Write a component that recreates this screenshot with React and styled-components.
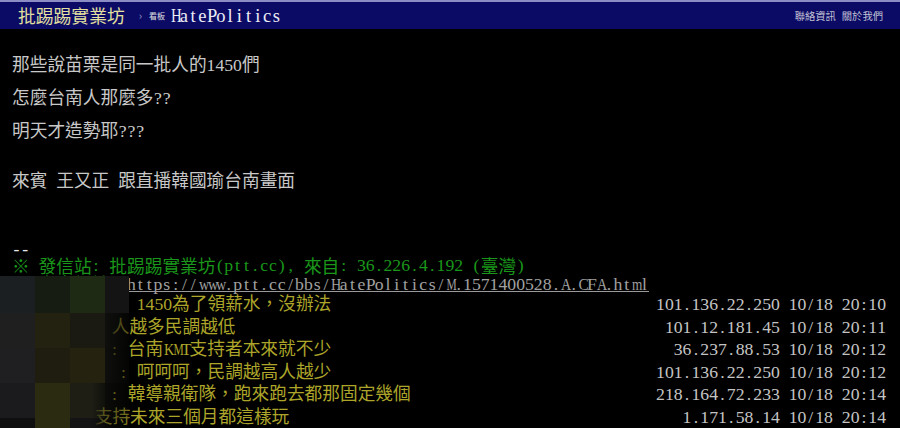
import React from 'react';
import styled, { createGlobalStyle } from 'styled-components';

const CJK = `"Noto Sans CJK TC", "Noto Sans CJK SC", sans-serif`;

const Global = createGlobalStyle`
  html, body { margin: 0; padding: 0; background: #000; }
  body { width: 900px; height: 428px; overflow: hidden; font-family: ${CJK}; }
`;

const Page = styled.div`
  width: 900px;
  height: 428px;
  background: #000;
  overflow: hidden;
`;

const TopBar = styled.header`
  height: 29px;
  box-sizing: border-box;
  border-top: 2px solid #8c8cc4;
  background: #0b0b66;
  display: flex;
  align-items: center;
  padding: 0 17px 0 18px;
`;

const SiteTitle = styled.span`
  font-family: ${CJK};
  font-size: 17.8px;
  line-height: 1;
  color: #e4e0a0;
`;

const Crumb = styled.span`
  font-family: ${CJK};
  font-size: 11px;
  line-height: 1;
  color: #9a9ac4;
  margin-left: 14px;
`;

const BoardLabel = styled.span`
  font-family: ${CJK};
  font-size: 8px;
  line-height: 1;
  color: #e0e0e0;
  margin-left: 7px;
`;

const BoardName = styled.span`
  font-size: 18.5px;
  line-height: 1;
  color: #ececf4;
  margin-left: 5px;
  white-space: pre;
`;

const Links = styled.nav`
  margin-left: auto;
  display: flex;
  gap: 6px;
`;

const LinkItem = styled.span`
  font-family: ${CJK};
  font-size: 10.3px;
  color: #c0c0d4;
`;

const Article = styled.main`
  padding: 17.5px 14px 0 12px;
`;

const TextLine = styled.div`
  font-family: ${CJK};
  font-size: 17.7px;
  line-height: 33px;
  height: 33px;
  color: #c8c8c8;
  white-space: pre;
`;

const Spacer = styled.div`
  height: ${(p) => p.$h}px;
`;

/* one half-width terminal cell, like MingLiU's Latin glyphs */
const Cell = styled.span`
  display: inline-block;
  width: 0.5em;
  text-align: center;
  font-family: "Liberation Serif", serif;
  transform: scaleX(${(p) => p.$sx});
`;

const Row = styled.div`
  display: flex;
  align-items: center;
  height: ${(p) => p.$h}px;
  line-height: ${(p) => p.$h}px;
  font-family: ${CJK};
  font-size: 17.7px;
  color: ${(p) => p.$color || '#c8c8c8'};
  white-space: pre;
`;

const Url = styled.span`
  display: inline-block;
  color: #a0a0a0;
  line-height: 14px;
  border-bottom: 1px solid #9a9a9a;
`;

const Footer = styled.section`
  position: relative;
`;

const PushContent = styled.span`
  margin-left: ${(p) => p.$indent}px;
  color: #aca52a;
`;

const PushMeta = styled.span`
  margin-left: auto;
  color: #c4c4c4;
`;

const Mosaic = styled.div`
  position: absolute;
  top: 1px;
  left: -12px;
  display: grid;
  grid-template-columns: 35px 35px 35px 24px;
  grid-template-rows: 37px 35px 35px 35px 10px;
`;

const Tile = styled.div`
  background: ${(p) => p.$bg};
`;

const WIDE = {
  m: 0.778, w: 0.722, M: 0.889, W: 0.944, H: 0.722, A: 0.722, C: 0.667, K: 0.722,
  T: 0.611, D: 0.722, N: 0.722, O: 0.722, U: 0.722, V: 0.722, G: 0.722, Q: 0.722,
  R: 0.667, B: 0.667, E: 0.611, L: 0.611, Z: 0.611, X: 0.722, Y: 0.722, S: 0.556,
  F: 0.556, P: 0.556, '%': 0.833, '@': 0.921,
};

const Mono = ({ text }) =>
  [...text].map((ch, i) => (
    <Cell key={i} $sx={WIDE[ch] ? Math.min(1, 0.58 / WIDE[ch]).toFixed(2) : 1}>
      {ch}
    </Cell>
  ));

const mix = (str) => {
  const parts = str.match(/[\x20-\x7e]+|[^\x20-\x7e]+/g) || [];
  return parts.map((s, i) =>
    /^[\x20-\x7e]+$/.test(s) ? <Mono key={i} text={s} /> : <React.Fragment key={i}>{s}</React.Fragment>
  );
};

const fade = (a) => `linear-gradient(90deg, rgba(18,18,16,${a}) 0%, rgba(10,10,8,${a * 0.55}) 100%)`;

const tiles = [
  ['#1b1f22', '#171c12', '#1e2a14', '#141414'],
  ['#1f1f20', '#23210f', '#1a1a13', fade(0.85)],
  ['#1f1f21', '#1e1d10', '#25230f', fade(0.8)],
  ['#1b1b1d', '#2b2b12', 'linear-gradient(90deg,#1e1e15 0%,#1e1e15 60%,rgba(30,30,21,0.55) 100%)', fade(0.6)],
  ['#0f0f0f', '#2b2b12', 'linear-gradient(90deg,#141414 0%,#141414 60%,rgba(20,20,20,0.5) 100%)', fade(0.5)],
];

const pushes = [
  { indent: 107, text: ': 1450為了領薪水，沒辦法', meta: '101.136.22.250 10/18 20:10' },
  { indent: 82, text: ': 人越多民調越低', meta: '101.12.181.45 10/18 20:11' },
  { indent: 98, text: ': 台南KMT支持者本來就不少', meta: '36.237.88.53 10/18 20:12' },
  { indent: 107, text: ': 呵呵呵，民調越高人越少', meta: '101.136.22.250 10/18 20:12' },
  { indent: 98, text: ': 韓導親衛隊，跑來跑去都那固定幾個', meta: '218.164.72.233 10/18 20:14' },
  { indent: 65, text: ': 支持未來三個月都這樣玩', meta: '1.171.58.14 10/18 20:14' },
];

export default function App() {
  return (
    <Page>
      <Global />
      <TopBar>
        <SiteTitle>批踢踢實業坊</SiteTitle>
        <Crumb>›</Crumb>
        <BoardLabel>看板</BoardLabel>
        <BoardName><Mono text="HatePolitics" /></BoardName>
        <Links>
          <LinkItem>聯絡資訊</LinkItem>
          <LinkItem>關於我們</LinkItem>
        </Links>
      </TopBar>
      <Article>
        <TextLine>{mix('那些說苗栗是同一批人的1450們')}</TextLine>
        <TextLine>{mix('怎麼台南人那麼多??')}</TextLine>
        <TextLine>{mix('明天才造勢耶???')}</TextLine>
        <Spacer $h={17} />
        <TextLine>{mix('來賓 王又正 跟直播韓國瑜台南畫面')}</TextLine>
        <Spacer $h={46.5} />
        <Row $h={14} $color="#e8e8e8">{mix('--')}</Row>
        <Row $h={19} $color="#1a961a">{mix('※ 發信站: 批踢踢實業坊(ptt.cc), 來自: 36.226.4.192 (臺灣)')}</Row>
        <Footer>
          <Row $h={17} $color="#1a961a">
            {mix('※ 文章網址: ')}
            <Url><Mono text="https://www.ptt.cc/bbs/HatePolitics/M.1571400528.A.CFA.html" /></Url>
          </Row>
          {pushes.map((p, i) => (
            <Row key={i} $h={22.5}>
              <PushContent $indent={p.indent}>{mix(p.text)}</PushContent>
              <PushMeta>{mix(p.meta)}</PushMeta>
            </Row>
          ))}
          <Mosaic>
            {tiles.flatMap((row, r) => row.map((bg, c) => <Tile key={`${r}-${c}`} $bg={bg} />))}
          </Mosaic>
        </Footer>
      </Article>
    </Page>
  );
}
